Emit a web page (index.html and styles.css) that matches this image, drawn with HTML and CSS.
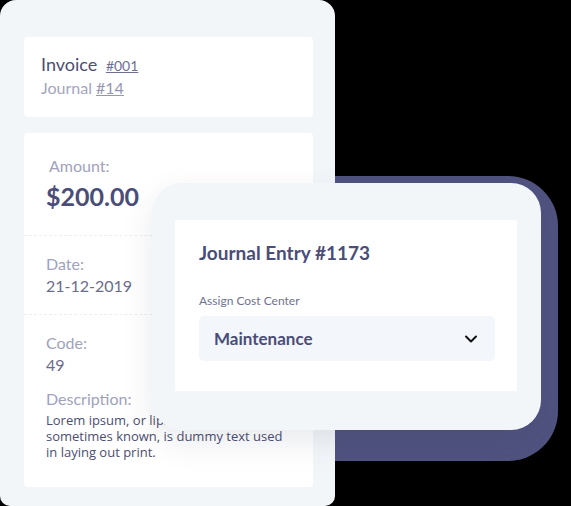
FILE: index.html
```html
<!DOCTYPE html>
<html>
<head>
<meta charset="utf-8">
<link rel="stylesheet" href="styles.css">
</head>
<body>
<div class="stage">
  <div class="backdrop"></div>
  <div class="panel">
    <div class="card head">
      <div class="invoice">Invoice <a class="ref">#001</a></div>
      <div class="journal">Journal <a class="ref2">#14</a></div>
    </div>
    <div class="card details">
      <div class="section amount">
        <div class="label">Amount:</div>
        <div class="money">$200.00</div>
      </div>
      <div class="section">
        <div class="label">Date:</div>
        <div class="value">21-12-2019</div>
      </div>
      <div class="section">
        <div class="label">Code:</div>
        <div class="value">49</div>
        <div class="label desc-label">Description:</div>
        <div class="desc">Lorem ipsum, or lipsum as it is sometimes known, is dummy text used in laying out print.</div>
      </div>
    </div>
  </div>
  <div class="popup">
    <div class="popup-inner">
      <div class="entry-title">Journal Entry #1173</div>
      <div class="field-label">Assign Cost Center</div>
      <div class="select">
        <span class="select-value">Maintenance</span>
        <svg class="chevron" width="14" height="10" viewBox="0 0 14 10"><path d="M2 2.5 L7 7.5 L12 2.5" fill="none" stroke="#111" stroke-width="2" stroke-linecap="round" stroke-linejoin="round"/></svg>
      </div>
    </div>
  </div>
</div>
</body>
</html>
```

FILE: styles.css
```css
html, body {
  margin: 0;
  padding: 0;
  background: #000;
}
.stage {
  position: relative;
  width: 571px;
  height: 506px;
  overflow: hidden;
  font-family: Lato, "Noto Sans", sans-serif;
}
.backdrop {
  position: absolute;
  left: 250px;
  top: 176px;
  width: 308px;
  height: 285px;
  border-radius: 50px;
  background: #50537f;
}
.panel {
  position: relative;
  width: 335px;
  height: 506px;
  box-sizing: border-box;
  background: #f3f6f9;
  border-radius: 16px 16px 10px 10px;
  padding: 37px 22px 0 24px;
  display: flex;
  flex-direction: column;
  gap: 16px;
}
.card {
  background: #fff;
  border-radius: 4px;
}
.head {
  height: 80px;
  box-sizing: border-box;
  padding: 15px 17px 0 17px;
}
.invoice {
  font-size: 18px;
  line-height: 24px;
  color: #4b4e72;
}
.ref {
  font-size: 14px;
  color: #6e7093;
  text-decoration: underline;
  margin-left: 4px;
}
.journal {
  font-size: 16px;
  line-height: 20px;
  color: #a3a5bf;
}
.ref2 {
  color: #9496b3;
  text-decoration: underline;
}
.details {
  height: 354px;
  display: flex;
  flex-direction: column;
}
.section {
  padding: 0 22px;
}
.section + .section {
  border-top: 1px dashed #eceef3;
}
.amount {
  padding-top: 22px;
  height: 80px;
}
.amount .label {
  padding-left: 3px;
}
.label {
  font-size: 16px;
  line-height: 22px;
  color: #a0a2bc;
}
.money {
  font-size: 25px;
  line-height: 30px;
  font-weight: 700;
  color: #4a4d78;
  margin-top: 4px;
}
.section:nth-child(2) {
  padding-top: 17px;
  height: 61px;
}
.section:nth-child(3) {
  padding-top: 17px;
  padding-right: 18px;
}
.value {
  font-size: 16px;
  line-height: 22px;
  color: #6a6c8b;
}
.desc-label {
  margin-top: 12px;
}
.desc {
  font-family: "Open Sans", Lato, sans-serif;
  font-size: 13px;
  line-height: 16px;
  color: #4b4e73;
  margin-top: 2px;
}
.popup {
  position: absolute;
  left: 152px;
  top: 183px;
  width: 389px;
  height: 247px;
  box-sizing: border-box;
  background: #f3f6f9;
  border-radius: 30px;
  padding: 37px 24px 0 23px;
  box-shadow: 0 12px 32px rgba(40, 45, 80, 0.10);
}
.popup-inner {
  background: #fff;
  height: 171px;
  box-sizing: border-box;
  padding: 20px 22px 0 24px;
}
.entry-title {
  font-size: 19px;
  line-height: 26px;
  font-weight: 700;
  color: #4a4d78;
}
.field-label {
  margin-top: 27px;
  font-size: 12px;
  line-height: 16px;
  color: #707292;
}
.select {
  margin-top: 7px;
  height: 45px;
  background: #f3f6fa;
  border-radius: 5px;
  display: flex;
  align-items: center;
  justify-content: space-between;
  padding: 0 17px 0 15px;
}
.select-value {
  font-size: 17px;
  font-weight: 700;
  color: #4a4d78;
}
.chevron {
  display: block;
}
```
